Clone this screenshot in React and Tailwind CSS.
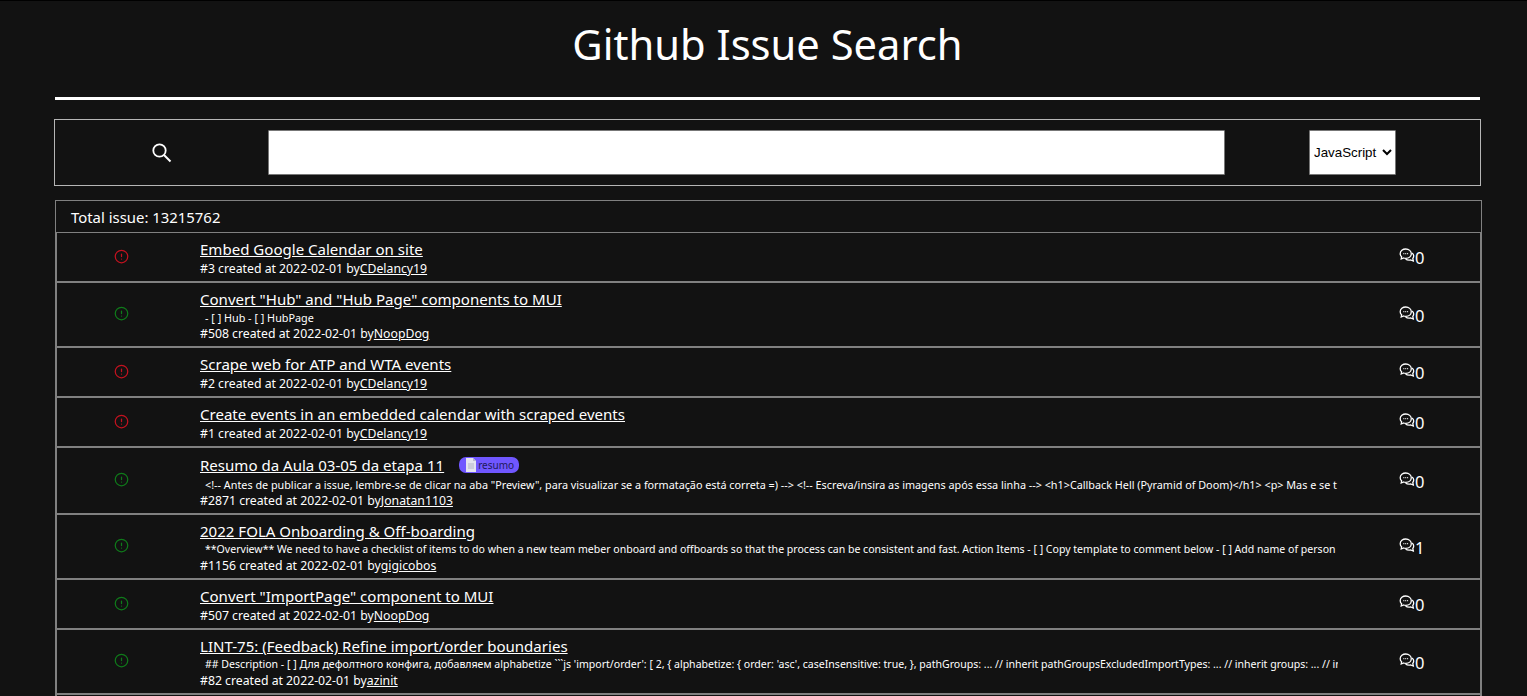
import { CircleAlert } from 'lucide-react';

const issues = [
  { title: 'Embed Google Calendar on site', meta: '#3 created at 2022-02-01 by', user: 'CDelancy19', closed: true, comments: 0 },
  { title: 'Convert "Hub" and "Hub Page" components to MUI', body: '- [ ] Hub - [ ] HubPage', bodySize: 'text-[10.8px]', meta: '#508 created at 2022-02-01 by', user: 'NoopDog', comments: 0 },
  { title: 'Scrape web for ATP and WTA events', meta: '#2 created at 2022-02-01 by', user: 'CDelancy19', closed: true, comments: 0 },
  { title: 'Create events in an embedded calendar with scraped events', meta: '#1 created at 2022-02-01 by', user: 'CDelancy19', closed: true, comments: 0 },
  {
    title: 'Resumo da Aula 03-05 da etapa 11',
    label: 'resumo',
    body: '<!-- Antes de publicar a issue, lembre-se de clicar na aba "Preview", para visualizar se a formatação está correta =) --> <!-- Escreva/insira as imagens após essa linha --> <h1>Callback Hell (Pyramid of Doom)</h1> <p> Mas e se t',
    bodySize: 'text-[10.8px]',
    meta: '#2871 created at 2022-02-01 by',
    user: 'Jonatan1103',
    comments: 0,
  },
  {
    title: '2022 FOLA Onboarding & Off-boarding',
    body: '**Overview** We need to have a checklist of items to do when a new team meber onboard and offboards so that the process can be consistent and fast. Action Items - [ ] Copy template to comment below - [ ] Add name of person',
    bodySize: 'text-[10.55px]',
    meta: '#1156 created at 2022-02-01 by',
    user: 'gigicobos',
    comments: 1,
  },
  { title: 'Convert "ImportPage" component to MUI', meta: '#507 created at 2022-02-01 by', user: 'NoopDog', comments: 0 },
  {
    title: 'LINT-75: (Feedback) Refine import/order boundaries',
    body: "## Description - [ ] Для дефолтного конфига, добавляем alphabetize ```js 'import/order': [ 2, { alphabetize: { order: 'asc', caseInsensitive: true, }, pathGroups: ... // inherit pathGroupsExcludedImportTypes: ... // inherit groups: ... // inh",
    bodySize: 'text-[10.55px]',
    meta: '#82 created at 2022-02-01 by',
    user: 'azinit',
    comments: 0,
  },
  { title: 'Add contributing guide', meta: '#81 created at 2022-02-01 by', user: 'azinit', comments: 0 },
];

const SearchIcon = () => (
  <svg width="20" height="20" viewBox="0 0 20 20" fill="none" stroke="currentColor" strokeWidth="1.8">
    <circle cx="7.500" cy="7.500" r="6.200" />
    <path d="M12 12l6.500 6.500" strokeWidth="2" />
  </svg>
);

const CommentIcon = () => (
  <svg width="16" height="16" viewBox="0 0 16 16" fill="none" stroke="currentColor" strokeWidth="1.300" className="shrink-0 -translate-y-[2px]">
    <path d="M6.800 1c-3.100 0-5.600 2-5.600 4.700 0 1.200.5 2.300 1.400 3.100L2.200 11l2.500-1c.6.200 1.300.3 2.100.3 3.100 0 5.500-2 5.500-4.600S9.900 1 6.800 1z" />
    <path d="M13.200 5c.9.8 1.500 1.800 1.500 3 0 .9-.3 1.800-.9 2.500l.5 2.500-2.800-1.100c-.5.100-1 .2-1.500.2-1.300 0-2.500-.4-3.400-1.200" />
    <path d="M4.400 5.700h.9M6.300 5.700h.9M8.200 5.700h.9" />
  </svg>
);

const DocIcon = () => (
  <svg width="10" height="14" viewBox="0 0 10 14" className="mr-[2px] shrink-0">
    <path d="M0 0h7l3 3v11H0z" fill="#e4e4ee" />
    <path d="M7 0l3 3H7z" fill="#b8b8cc" />
    <path d="M2 6h6M2 8h6M2 10h6" stroke="#b4b4c8" strokeWidth="1" />
  </svg>
);

function IssueRow({ issue }) {
  return (
    <div className="flex items-center border-2 border-t-0 border-[#808080]">
      <div className="flex w-[128px] shrink-0 justify-center pb-[2px]">
        <CircleAlert size={15} strokeWidth={2} className={issue.closed ? 'text-[#c3121f]' : 'text-[#0f7a1a]'} />
      </div>
      <div className="w-[1153px] shrink-0 pl-[15px] pt-[5px] pb-[4px]">
        <div className={`flex items-center whitespace-nowrap text-[15.05px] ${issue.label ? 'h-[24px]' : 'h-[22px]'}`}>
          <a href="#" className="leading-[22px] text-white underline">{issue.title}</a>
          {issue.label && (
            <span className="ml-[15px] flex h-[16px] w-[60px] items-center rounded-[7px] bg-[#7057ff] pl-[7px] text-[10px] leading-none text-[#1e1a5c]">
              <DocIcon />
              {issue.label}
            </span>
          )}
        </div>
        {issue.body && (
          <div className={`overflow-hidden whitespace-nowrap pl-[5px] leading-[15px] text-white ${issue.bodySize}`}>{issue.body}</div>
        )}
        <div className="text-[12.25px] leading-[17px] text-white">
          {issue.meta}
          <a href="#" className="underline">{issue.user}</a>
        </div>
      </div>
      <div className="flex flex-1 items-center pl-[61px] pt-[2px] text-white">
        <CommentIcon />
        <span className="text-[16.500px] leading-[22px]">{issue.comments}</span>
      </div>
    </div>
  );
}

export default function App() {
  return (
    <div className="min-h-screen border-t border-black bg-[#121212] px-[55px] font-['Noto_Sans','Open_Sans',sans-serif] text-white">
      <h1 className="h-[96px] pl-[8px] pt-[13px] text-center text-[41.700px] leading-[60px]">Github Issue Search</h1>
      <hr className="h-[3px] w-[1425px] border-0 bg-white" />
      <div className="mt-[19px] -ml-[1px] flex h-[67px] w-[1427px] items-center border border-[#b5b5b5]">
        <div className="flex w-[213px] justify-center">
          <SearchIcon />
        </div>
        <input className="h-[45px] w-[957px] rounded-[1px] border border-[#777] bg-white px-2 text-black" />
        <div className="ml-[84px]">
          <select defaultValue="JavaScript" className="h-[45px] w-[87px] rounded-[1px] border border-[#777] bg-white font-['Liberation_Sans',sans-serif] text-[13.333px] text-black">
            <option>JavaScript</option>
            <option>Python</option>
          </select>
        </div>
      </div>
      <div className="mt-[14px] w-[1427px]">
        <div className="h-[32px] border border-b-0 border-[#808080] pl-[15px] text-[14.900px] leading-[33px] text-white">Total issue: 13215762</div>
        <div className="border-t border-[#808080]">
          {issues.map((issue) => (
            <IssueRow key={issue.meta} issue={issue} />
          ))}
        </div>
      </div>
    </div>
  );
}
